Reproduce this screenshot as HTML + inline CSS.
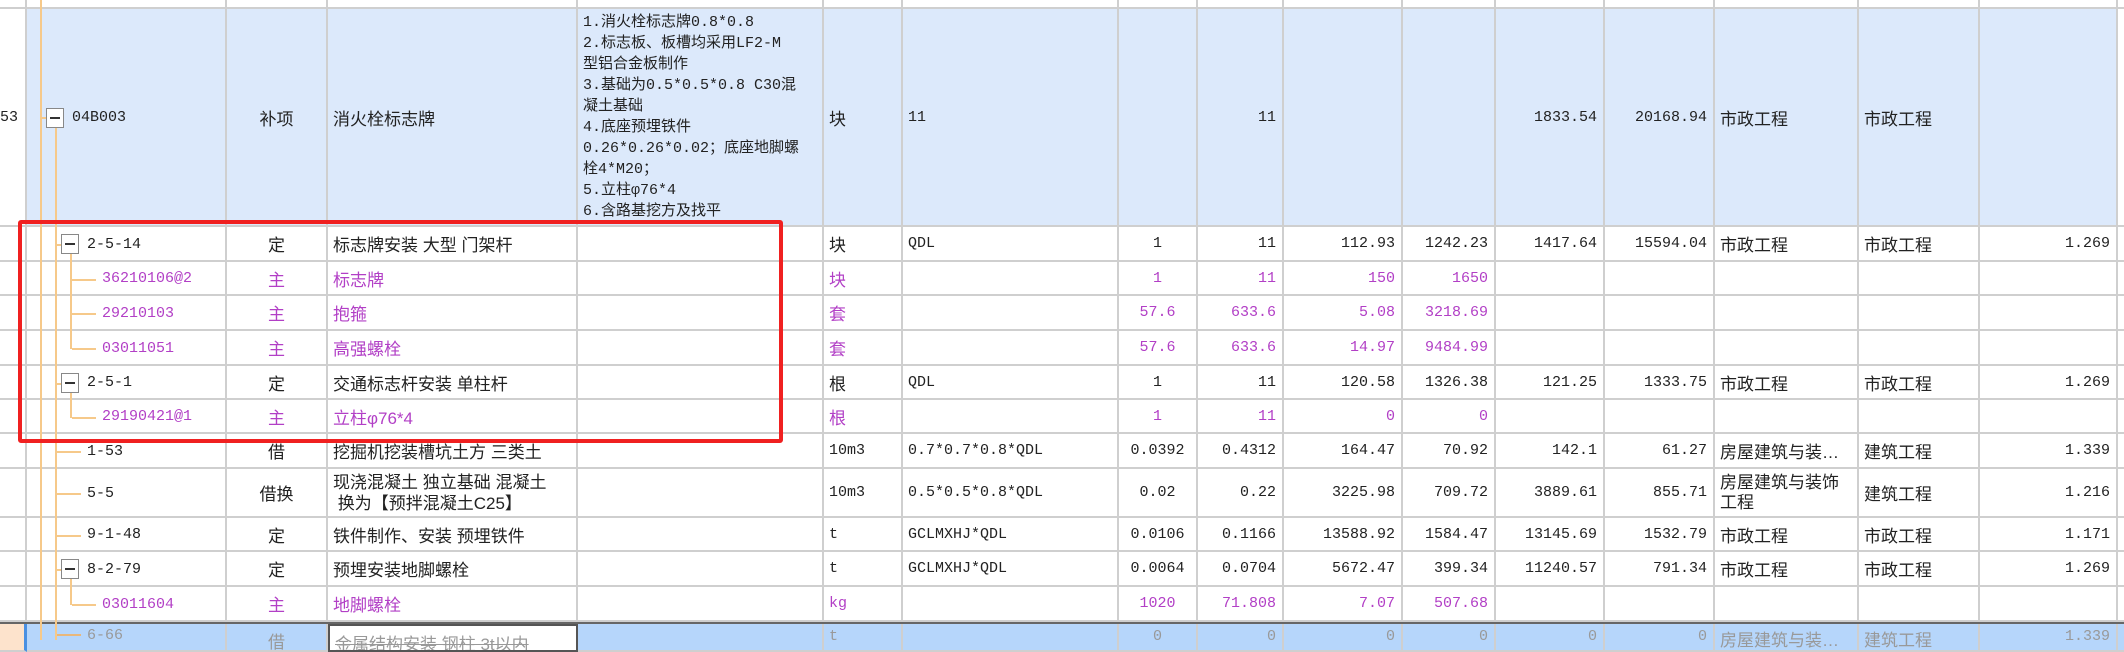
<!DOCTYPE html>
<html><head><meta charset="utf-8"><style>
*{box-sizing:border-box;margin:0;padding:0}
body{width:2124px;height:640px;overflow:hidden;background:#fff;position:relative;font-family:"Liberation Mono","Noto Sans CJK SC",monospace;color:#222}
.r{position:absolute;left:0;width:2124px;display:flex}
.c{height:100%;border-right:2px solid #cfcfcf;border-bottom:2px solid #cfcfcf;display:flex;align-items:center;overflow:hidden;white-space:nowrap;font-size:15px}
.z{font-family:"Liberation Sans","Noto Sans CJK SC",sans-serif;font-size:17px}
.n{justify-content:flex-end;padding-right:6px}
.l{padding-left:5px}
.m{justify-content:center}
.p{color:#b23fc6}
.w0{width:27px}.w1{width:200px}.w2{width:101px}.w3{width:250px}.w4{width:246px}.w5{width:79px}.w6{width:216px}.w7{width:79px}.w8{width:86px}.w9{width:119px}.w10{width:93px}.w11{width:109px}.w12{width:110px}.w13{width:144px}.w14{width:121px}.w15{width:138px}.w16{width:6px;border-right:none}
.blue .c{background:#dce9fb}
.sel .c{background:#b6d6fb;color:#999}
.ln{position:absolute;background:#f6c98a}
.bx{position:absolute;width:18px;height:20px;border:1.5px solid #888;background:#fff}
.bx:after{content:"";position:absolute;left:3px;right:3px;top:8px;height:1.5px;background:#333}
.t{position:absolute;font-size:15px;line-height:20px;white-space:nowrap}
</style></head><body>

<div class="r" style="top:0;height:9px"><div class="c w0"></div><div class="c w1"></div><div class="c w2"></div><div class="c w3"></div><div class="c w4"></div><div class="c w5"></div><div class="c w6"></div><div class="c w7"></div><div class="c w8"></div><div class="c w9"></div><div class="c w10"></div><div class="c w11"></div><div class="c w12"></div><div class="c w13"></div><div class="c w14"></div><div class="c w15"></div><div class="c w16"></div></div>

<div class="r blue" style="top:9px;height:218px"><div class="c w0" style="background:#fff">53</div><div class="c w1"></div><div class="c w2 z m">补项</div><div class="c w3 z l">消火栓标志牌</div><div class="c w4 l" style="font-size:15px;line-height:21px;align-items:flex-start;padding-top:3px"><div>1.消火栓标志牌0.8*0.8<br>2.标志板、板槽均采用LF2-M<br>型铝合金板制作<br>3.基础为0.5*0.5*0.8 C30混<br>凝土基础<br>4.底座预埋铁件<br>0.26*0.26*0.02；底座地脚螺<br>栓4*M20；<br>5.立柱φ76*4<br>6.含路基挖方及找平</div></div><div class="c w5 z l">块</div><div class="c w6 l">11</div><div class="c w7"></div><div class="c w8 n">11</div><div class="c w9"></div><div class="c w10"></div><div class="c w11 n">1833.54</div><div class="c w12 n">20168.94</div><div class="c w13 z l">市政工程</div><div class="c w14 z l">市政工程</div><div class="c w15"></div><div class="c w16" style="background:#fff"></div></div>

<div class="r" style="top:227px;height:35px"><div class="c w0"></div><div class="c w1"></div><div class="c w2 z m">定</div><div class="c w3 z l">标志牌安装 大型 门架杆</div><div class="c w4"></div><div class="c w5 z l">块</div><div class="c w6 l">QDL</div><div class="c w7 m">1</div><div class="c w8 n">11</div><div class="c w9 n">112.93</div><div class="c w10 n">1242.23</div><div class="c w11 n">1417.64</div><div class="c w12 n">15594.04</div><div class="c w13 z l">市政工程</div><div class="c w14 z l">市政工程</div><div class="c w15 n">1.269</div><div class="c w16"></div></div>

<div class="r p" style="top:262px;height:34px"><div class="c w0"></div><div class="c w1"></div><div class="c w2 z m">主</div><div class="c w3 z l">标志牌</div><div class="c w4"></div><div class="c w5 z l">块</div><div class="c w6"></div><div class="c w7 m">1</div><div class="c w8 n">11</div><div class="c w9 n">150</div><div class="c w10 n">1650</div><div class="c w11"></div><div class="c w12"></div><div class="c w13"></div><div class="c w14"></div><div class="c w15"></div><div class="c w16"></div></div>

<div class="r p" style="top:296px;height:35px"><div class="c w0"></div><div class="c w1"></div><div class="c w2 z m">主</div><div class="c w3 z l">抱箍</div><div class="c w4"></div><div class="c w5 z l">套</div><div class="c w6"></div><div class="c w7 m">57.6</div><div class="c w8 n">633.6</div><div class="c w9 n">5.08</div><div class="c w10 n">3218.69</div><div class="c w11"></div><div class="c w12"></div><div class="c w13"></div><div class="c w14"></div><div class="c w15"></div><div class="c w16"></div></div>

<div class="r p" style="top:331px;height:35px"><div class="c w0"></div><div class="c w1"></div><div class="c w2 z m">主</div><div class="c w3 z l">高强螺栓</div><div class="c w4"></div><div class="c w5 z l">套</div><div class="c w6"></div><div class="c w7 m">57.6</div><div class="c w8 n">633.6</div><div class="c w9 n">14.97</div><div class="c w10 n">9484.99</div><div class="c w11"></div><div class="c w12"></div><div class="c w13"></div><div class="c w14"></div><div class="c w15"></div><div class="c w16"></div></div>

<div class="r" style="top:366px;height:34px"><div class="c w0"></div><div class="c w1"></div><div class="c w2 z m">定</div><div class="c w3 z l">交通标志杆安装 单柱杆</div><div class="c w4"></div><div class="c w5 z l">根</div><div class="c w6 l">QDL</div><div class="c w7 m">1</div><div class="c w8 n">11</div><div class="c w9 n">120.58</div><div class="c w10 n">1326.38</div><div class="c w11 n">121.25</div><div class="c w12 n">1333.75</div><div class="c w13 z l">市政工程</div><div class="c w14 z l">市政工程</div><div class="c w15 n">1.269</div><div class="c w16"></div></div>

<div class="r p" style="top:400px;height:34px"><div class="c w0"></div><div class="c w1"></div><div class="c w2 z m">主</div><div class="c w3 z l">立柱φ76*4</div><div class="c w4"></div><div class="c w5 z l">根</div><div class="c w6"></div><div class="c w7 m">1</div><div class="c w8 n">11</div><div class="c w9 n">0</div><div class="c w10 n">0</div><div class="c w11"></div><div class="c w12"></div><div class="c w13"></div><div class="c w14"></div><div class="c w15"></div><div class="c w16"></div></div>

<div class="r" style="top:434px;height:35px"><div class="c w0"></div><div class="c w1"></div><div class="c w2 z m">借</div><div class="c w3 z l">挖掘机挖装槽坑土方 三类土</div><div class="c w4"></div><div class="c w5 l">10m3</div><div class="c w6 l">0.7*0.7*0.8*QDL</div><div class="c w7 m">0.0392</div><div class="c w8 n">0.4312</div><div class="c w9 n">164.47</div><div class="c w10 n">70.92</div><div class="c w11 n">142.1</div><div class="c w12 n">61.27</div><div class="c w13 z l">房屋建筑与装…</div><div class="c w14 z l">建筑工程</div><div class="c w15 n">1.339</div><div class="c w16"></div></div>

<div class="r" style="top:469px;height:49px"><div class="c w0"></div><div class="c w1"></div><div class="c w2 z m">借换</div><div class="c w3 z l" style="line-height:21px">现浇混凝土 独立基础 混凝土<br>&nbsp;换为【预拌混凝土C25】</div><div class="c w4"></div><div class="c w5 l">10m3</div><div class="c w6 l">0.5*0.5*0.8*QDL</div><div class="c w7 m">0.02</div><div class="c w8 n">0.22</div><div class="c w9 n">3225.98</div><div class="c w10 n">709.72</div><div class="c w11 n">3889.61</div><div class="c w12 n">855.71</div><div class="c w13 z l" style="line-height:20px">房屋建筑与装饰<br>工程</div><div class="c w14 z l">建筑工程</div><div class="c w15 n">1.216</div><div class="c w16"></div></div>

<div class="r" style="top:518px;height:34px"><div class="c w0"></div><div class="c w1"></div><div class="c w2 z m">定</div><div class="c w3 z l">铁件制作、安装 预埋铁件</div><div class="c w4"></div><div class="c w5 l">t</div><div class="c w6 l">GCLMXHJ*QDL</div><div class="c w7 m">0.0106</div><div class="c w8 n">0.1166</div><div class="c w9 n">13588.92</div><div class="c w10 n">1584.47</div><div class="c w11 n">13145.69</div><div class="c w12 n">1532.79</div><div class="c w13 z l">市政工程</div><div class="c w14 z l">市政工程</div><div class="c w15 n">1.171</div><div class="c w16"></div></div>

<div class="r" style="top:552px;height:35px"><div class="c w0"></div><div class="c w1"></div><div class="c w2 z m">定</div><div class="c w3 z l">预埋安装地脚螺栓</div><div class="c w4"></div><div class="c w5 l">t</div><div class="c w6 l">GCLMXHJ*QDL</div><div class="c w7 m">0.0064</div><div class="c w8 n">0.0704</div><div class="c w9 n">5672.47</div><div class="c w10 n">399.34</div><div class="c w11 n">11240.57</div><div class="c w12 n">791.34</div><div class="c w13 z l">市政工程</div><div class="c w14 z l">市政工程</div><div class="c w15 n">1.269</div><div class="c w16"></div></div>

<div class="r p" style="top:587px;height:35px"><div class="c w0"></div><div class="c w1"></div><div class="c w2 z m">主</div><div class="c w3 z l">地脚螺栓</div><div class="c w4"></div><div class="c w5 l">kg</div><div class="c w6"></div><div class="c w7 m">1020</div><div class="c w8 n">71.808</div><div class="c w9 n">7.07</div><div class="c w10 n">507.68</div><div class="c w11"></div><div class="c w12"></div><div class="c w13"></div><div class="c w14"></div><div class="c w15"></div><div class="c w16"></div></div>

<div class="r sel" style="top:622px;height:30px;border-top:2px solid #666"><div class="c w0" style="background:#fde3cc;border-right:3px solid #4a90e2"></div><div class="c w1"></div><div class="c w2 z m" style="align-items:flex-start;padding-top:4px">借</div><div class="c w3 z l" style="background:#fff;border:2px solid #555;align-items:flex-start;padding-top:4px;text-decoration:line-through">金属结构安装 钢柱 3t以内</div><div class="c w4"></div><div class="c w5 l" style="align-items:flex-start;padding-top:4px">t</div><div class="c w6"></div><div class="c w7 m" style="align-items:flex-start;padding-top:4px">0</div><div class="c w8 n" style="align-items:flex-start;padding-top:4px">0</div><div class="c w9 n" style="align-items:flex-start;padding-top:4px">0</div><div class="c w10 n" style="align-items:flex-start;padding-top:4px">0</div><div class="c w11 n" style="align-items:flex-start;padding-top:4px">0</div><div class="c w12 n" style="align-items:flex-start;padding-top:4px">0</div><div class="c w13 z l" style="align-items:flex-start;padding-top:2px">房屋建筑与装…</div><div class="c w14 z l" style="align-items:flex-start;padding-top:2px">建筑工程</div><div class="c w15 n" style="align-items:flex-start;padding-top:4px">1.339</div><div class="c w16"></div></div>

<!-- tree lines -->
<div class="ln" style="left:40px;top:0;width:2px;height:640px"></div>
<div class="ln" style="left:55px;top:128px;width:2px;height:512px"></div>
<div class="ln" style="left:42px;top:117px;width:6px;height:2px"></div>
<div class="ln" style="left:57px;top:244px;width:6px;height:2px"></div>
<div class="ln" style="left:57px;top:383px;width:6px;height:2px"></div>
<div class="ln" style="left:57px;top:569px;width:6px;height:2px"></div>
<div class="ln" style="left:57px;top:451px;width:24px;height:2px"></div>
<div class="ln" style="left:57px;top:493px;width:24px;height:2px"></div>
<div class="ln" style="left:57px;top:535px;width:24px;height:2px"></div>
<div class="ln" style="left:57px;top:634px;width:24px;height:2px;background:#e9b77a"></div>
<div class="ln" style="left:70px;top:254px;width:2px;height:95px"></div>
<div class="ln" style="left:70px;top:392px;width:2px;height:26px"></div>
<div class="ln" style="left:70px;top:579px;width:2px;height:26px"></div>
<div class="ln" style="left:72px;top:279px;width:24px;height:2px"></div>
<div class="ln" style="left:72px;top:313px;width:24px;height:2px"></div>
<div class="ln" style="left:72px;top:348px;width:24px;height:2px"></div>
<div class="ln" style="left:72px;top:417px;width:24px;height:2px"></div>
<div class="ln" style="left:72px;top:604px;width:24px;height:2px"></div>
<div class="bx" style="left:46px;top:108px"></div>
<div class="bx" style="left:61px;top:234px"></div>
<div class="bx" style="left:61px;top:373px"></div>
<div class="bx" style="left:61px;top:559px"></div>
<div class="t" style="left:72px;top:108px">04B003</div>
<div class="t" style="left:87px;top:235px">2-5-14</div>
<div class="t p" style="left:102px;top:269px">36210106@2</div>
<div class="t p" style="left:102px;top:304px">29210103</div>
<div class="t p" style="left:102px;top:339px">03011051</div>
<div class="t" style="left:87px;top:373px">2-5-1</div>
<div class="t p" style="left:102px;top:407px">29190421@1</div>
<div class="t" style="left:87px;top:442px">1-53</div>
<div class="t" style="left:87px;top:484px">5-5</div>
<div class="t" style="left:87px;top:525px">9-1-48</div>
<div class="t" style="left:87px;top:560px">8-2-79</div>
<div class="t p" style="left:102px;top:595px">03011604</div>
<div class="t" style="left:87px;top:626px;color:#999">6-66</div>

<!-- red box -->
<div style="position:absolute;left:18px;top:220px;width:765px;height:223px;border:4px solid #f02020;border-radius:3px"></div>
</body></html>
